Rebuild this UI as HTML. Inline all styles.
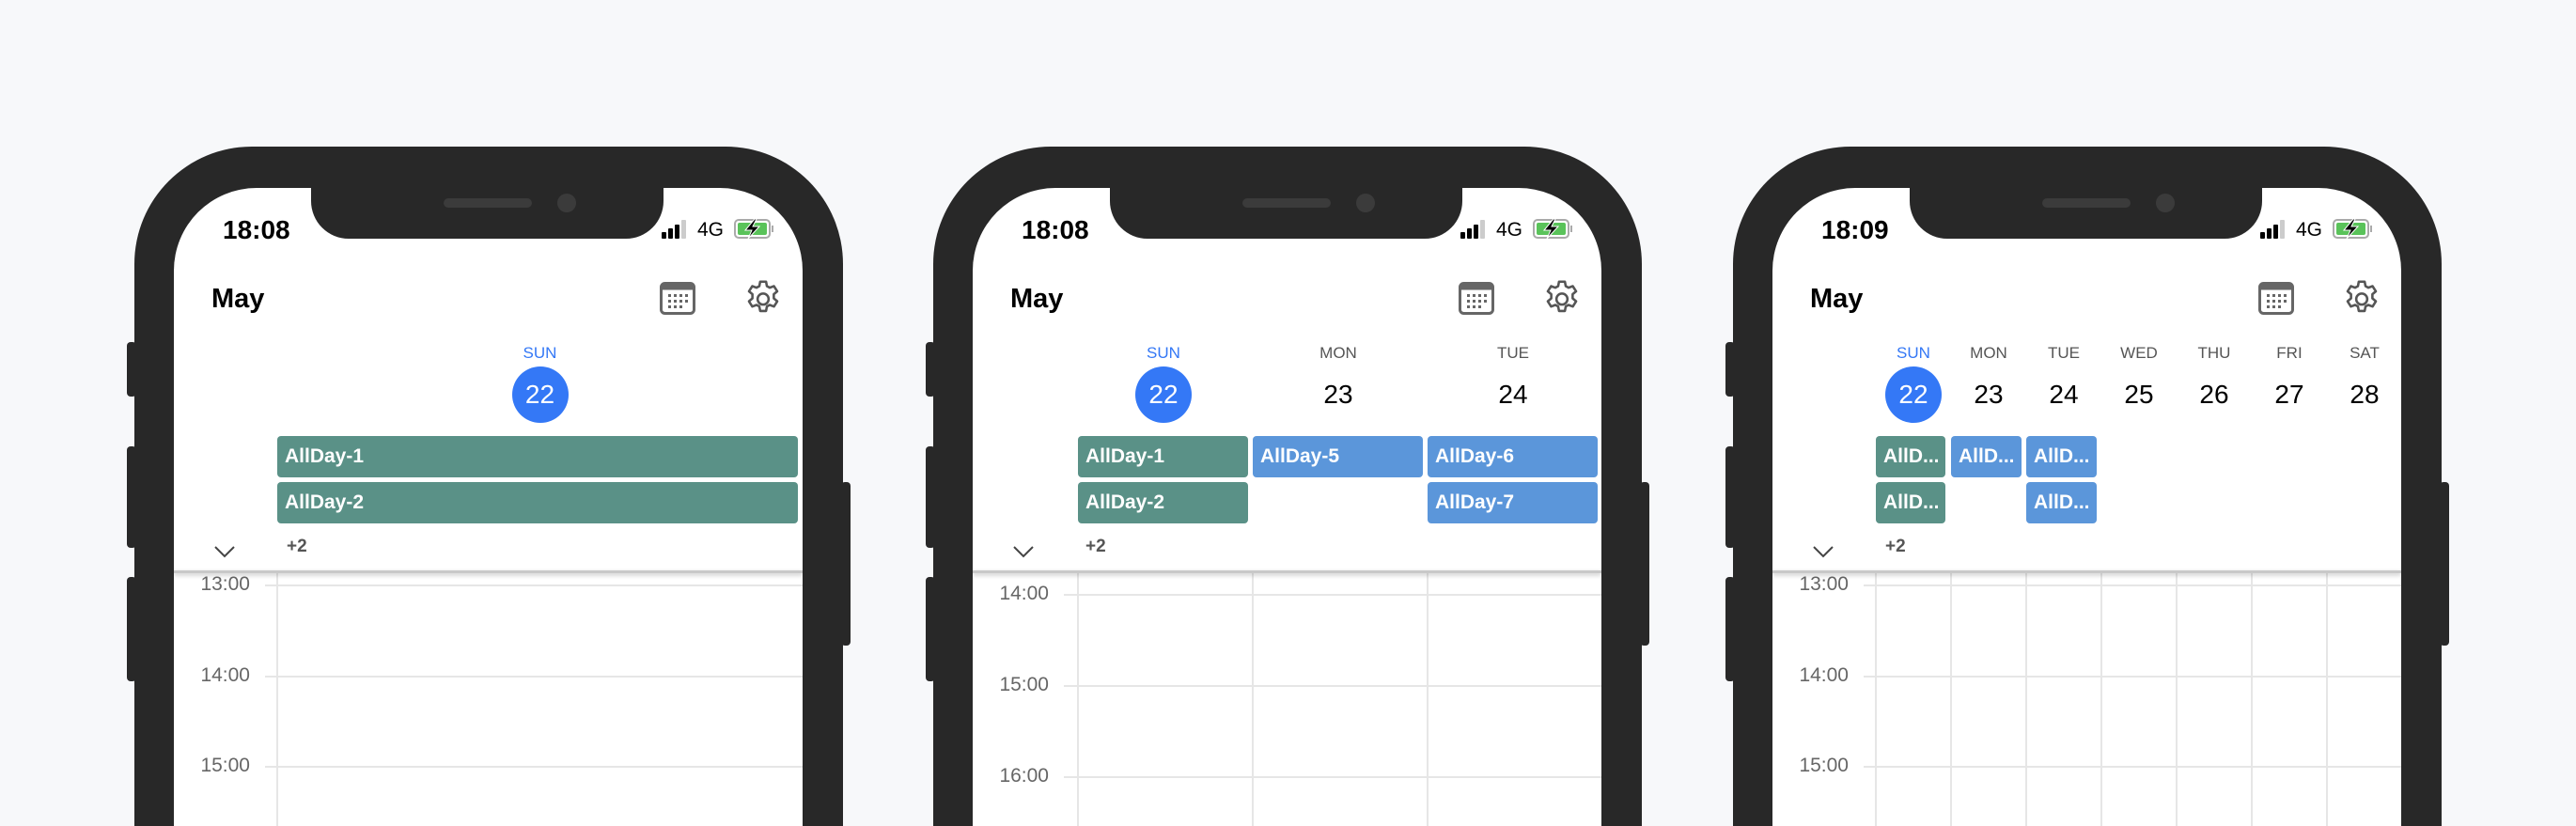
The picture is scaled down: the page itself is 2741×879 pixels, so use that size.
<!DOCTYPE html><html><head><style>
*{margin:0;padding:0;box-sizing:border-box}
html,body{width:2741px;height:879px;overflow:hidden}
body{background:#f7f8fa;position:relative;font-family:"Liberation Sans",Arial,sans-serif}
.ph{position:absolute;top:156px;width:754px;height:723px;background:#282828;border-radius:125px 125px 0 0}
.btn{position:absolute;width:10px;background:#282828;border-radius:4px}
.sc{position:absolute;left:42px;top:44px;width:669px;height:679px;background:#fff;border-radius:88px 88px 0 0;overflow:hidden}
.notch{position:absolute;left:146px;top:0;width:375px;height:54px;background:#282828;border-radius:0 0 40px 40px}
.spk{position:absolute;left:141px;top:11px;width:94px;height:10px;background:#3b3b3b;border-radius:5px}
.cam{position:absolute;left:262px;top:6px;width:20px;height:20px;background:#3b3b3b;border-radius:50%}
.time{position:absolute;left:52px;top:29px;font-size:28px;font-weight:700;color:#000}
.sig{position:absolute;left:519px;top:34px}
.g4{position:absolute;left:557px;top:33px;font-size:21px;color:#000}
.bat{position:absolute;left:596px;top:33px}
.may{position:absolute;left:40px;top:102px;font-size:29px;font-weight:700;color:#000}
.cal{position:absolute;left:517px;top:100px}
.gear{position:absolute;left:605px;top:97px}
.dl{position:absolute;top:166px;font-size:17px;color:#555;text-align:center}
.dn{position:absolute;top:204px;font-size:28px;color:#000;text-align:center;line-height:32px}
.circ{position:absolute;top:190px;width:60px;height:60px;border-radius:50%;background:#3478f6}
.ev{position:absolute;height:44px;border-radius:4px;color:#fff;font-size:21px;font-weight:700;line-height:44px;padding-left:8px;white-space:nowrap;overflow:hidden}
.gr{background:#5a9187}.bl{background:#5b96da}
.chev{position:absolute;left:43px;top:380px}
.more{position:absolute;left:120px;top:371px;font-size:19px;font-weight:700;color:#555}
.hd{position:absolute;left:0;top:407px;width:669px;height:3px;background:#c8c8c8;box-shadow:0 2px 5px rgba(0,0,0,.25)}
.hl{position:absolute;left:97px;width:572px;height:2px;background:#e6e6e6}
.vl{position:absolute;top:410px;width:2px;height:300px;background:#e6e6e6}
.tl{position:absolute;width:81px;text-align:right;font-size:21px;color:#666}
</style></head><body>

<div class="ph" style="left:143px">
<div class="btn" style="left:-8px;top:208px;height:58px"></div>
<div class="btn" style="left:-8px;top:319px;height:108px"></div>
<div class="btn" style="left:-8px;top:458px;height:111px"></div>
<div class="btn" style="left:752px;top:357px;height:174px"></div>
<div class="sc">
<div class="notch"><div class="spk"></div><div class="cam"></div></div>
<div class="time">18:08</div>
<svg class="sig" width="30" height="20"><rect x="0" y="13" width="5" height="7" rx="1"/><rect x="7" y="9" width="5" height="11" rx="1"/><rect x="14" y="5" width="5" height="15" rx="1"/><rect x="21" y="0" width="5" height="20" rx="1" fill="#ccc"/></svg>
<div class="g4">4G</div>
<svg class="bat" width="44" height="21"><rect x="1" y="1" width="37" height="19" rx="4" fill="none" stroke="#aaa" stroke-width="2"/><rect x="4" y="4" width="31" height="13" rx="2" fill="#5ac35a"/><rect x="40" y="7" width="2" height="7" fill="#aaa"/><path d="M22 0 L12 12 L19 12 L15 21 L27 8 L20 8 L24 0Z" fill="#000" stroke="#fff" stroke-width="1"/></svg>
<div class="may">May</div>
<svg class="cal" width="38" height="35"><rect x="1.5" y="1.5" width="35" height="32" rx="4" fill="#fff" stroke="#666" stroke-width="3"/><rect x="1.5" y="1.5" width="35" height="7" fill="#666"/><g fill="#666"><rect x="9" y="13" width="3" height="3"/><rect x="15" y="13" width="3" height="3"/><rect x="21" y="13" width="3" height="3"/><rect x="27" y="13" width="3" height="3"/><rect x="9" y="19" width="3" height="3"/><rect x="15" y="19" width="3" height="3"/><rect x="21" y="19" width="3" height="3"/><rect x="27" y="19" width="3" height="3"/><rect x="9" y="25" width="3" height="3"/><rect x="15" y="25" width="3" height="3"/><rect x="21" y="25" width="3" height="3"/></g></svg>
<svg class="gear" width="44" height="44" viewBox="0 0 24 24"><path fill="none" stroke="#555" stroke-width="1.4" stroke-linejoin="round" d="M10.3 1.5h3.4l.5 2.6 1.6.9 2.5-.9 1.9 3-2 1.7v2.4l2 1.7-1.9 3-2.5-.9-1.6.9-.5 2.6h-3.4l-.5-2.6-1.6-.9-2.5.9-1.9-3 2-1.7V8.8l-2-1.7 1.9-3 2.5.9 1.6-.9z"/><circle cx="12" cy="11.6" r="3.2" fill="none" stroke="#555" stroke-width="1.4"/></svg>
<div class="dl" style="left:110px;width:559px;color:#3478f6">SUN</div>
<div class="circ" style="left:360px"></div>
<div class="dn" style="left:110px;width:559px;color:#fff">22</div>
<div class="ev gr" style="left:110px;top:264px;width:554px">AllDay-1</div>
<div class="ev gr" style="left:110px;top:313px;width:554px">AllDay-2</div>
<svg class="chev" width="22" height="14"><path d="M1 2 L11 12 L21 2" fill="none" stroke="#444" stroke-width="2"/></svg>
<div class="more">+2</div>
<div class="vl" style="left:109px"></div>
<div class="hl" style="top:422px"></div><div class="hl" style="top:519px"></div><div class="hl" style="top:615px"></div>
<div class="tl" style="left:0;top:410px">13:00</div><div class="tl" style="left:0;top:507px">14:00</div><div class="tl" style="left:0;top:603px">15:00</div>
<div class="hd"></div>
</div></div>

<div class="ph" style="left:993px">
<div class="btn" style="left:-8px;top:208px;height:58px"></div>
<div class="btn" style="left:-8px;top:319px;height:108px"></div>
<div class="btn" style="left:-8px;top:458px;height:111px"></div>
<div class="btn" style="left:752px;top:357px;height:174px"></div>
<div class="sc">
<div class="notch"><div class="spk"></div><div class="cam"></div></div>
<div class="time">18:08</div>
<svg class="sig" width="30" height="20"><rect x="0" y="13" width="5" height="7" rx="1"/><rect x="7" y="9" width="5" height="11" rx="1"/><rect x="14" y="5" width="5" height="15" rx="1"/><rect x="21" y="0" width="5" height="20" rx="1" fill="#ccc"/></svg>
<div class="g4">4G</div>
<svg class="bat" width="44" height="21"><rect x="1" y="1" width="37" height="19" rx="4" fill="none" stroke="#aaa" stroke-width="2"/><rect x="4" y="4" width="31" height="13" rx="2" fill="#5ac35a"/><rect x="40" y="7" width="2" height="7" fill="#aaa"/><path d="M22 0 L12 12 L19 12 L15 21 L27 8 L20 8 L24 0Z" fill="#000" stroke="#fff" stroke-width="1"/></svg>
<div class="may">May</div>
<svg class="cal" width="38" height="35"><rect x="1.5" y="1.5" width="35" height="32" rx="4" fill="#fff" stroke="#666" stroke-width="3"/><rect x="1.5" y="1.5" width="35" height="7" fill="#666"/><g fill="#666"><rect x="9" y="13" width="3" height="3"/><rect x="15" y="13" width="3" height="3"/><rect x="21" y="13" width="3" height="3"/><rect x="27" y="13" width="3" height="3"/><rect x="9" y="19" width="3" height="3"/><rect x="15" y="19" width="3" height="3"/><rect x="21" y="19" width="3" height="3"/><rect x="27" y="19" width="3" height="3"/><rect x="9" y="25" width="3" height="3"/><rect x="15" y="25" width="3" height="3"/><rect x="21" y="25" width="3" height="3"/></g></svg>
<svg class="gear" width="44" height="44" viewBox="0 0 24 24"><path fill="none" stroke="#555" stroke-width="1.4" stroke-linejoin="round" d="M10.3 1.5h3.4l.5 2.6 1.6.9 2.5-.9 1.9 3-2 1.7v2.4l2 1.7-1.9 3-2.5-.9-1.6.9-.5 2.6h-3.4l-.5-2.6-1.6-.9-2.5.9-1.9-3 2-1.7V8.8l-2-1.7 1.9-3 2.5.9 1.6-.9z"/><circle cx="12" cy="11.6" r="3.2" fill="none" stroke="#555" stroke-width="1.4"/></svg>
<div class="dl" style="left:110px;width:186px;color:#3478f6">SUN</div>
<div class="dl" style="left:296px;width:186px">MON</div>
<div class="dl" style="left:482px;width:186px">TUE</div>
<div class="circ" style="left:173px"></div>
<div class="dn" style="left:110px;width:186px;color:#fff">22</div>
<div class="dn" style="left:296px;width:186px">23</div>
<div class="dn" style="left:482px;width:186px">24</div>
<div class="ev gr" style="left:112px;top:264px;width:181px">AllDay-1</div>
<div class="ev gr" style="left:112px;top:313px;width:181px">AllDay-2</div>
<div class="ev bl" style="left:298px;top:264px;width:181px">AllDay-5</div>
<div class="ev bl" style="left:484px;top:264px;width:181px">AllDay-6</div>
<div class="ev bl" style="left:484px;top:313px;width:181px">AllDay-7</div>
<svg class="chev" width="22" height="14"><path d="M1 2 L11 12 L21 2" fill="none" stroke="#444" stroke-width="2"/></svg>
<div class="more">+2</div>
<div class="vl" style="left:111px"></div><div class="vl" style="left:297px"></div><div class="vl" style="left:483px"></div>
<div class="hl" style="top:432px"></div><div class="hl" style="top:529px"></div><div class="hl" style="top:626px"></div>
<div class="tl" style="left:0;top:420px">14:00</div><div class="tl" style="left:0;top:517px">15:00</div><div class="tl" style="left:0;top:614px">16:00</div>
<div class="hd"></div>
</div></div>

<div class="ph" style="left:1844px">
<div class="btn" style="left:-8px;top:208px;height:58px"></div>
<div class="btn" style="left:-8px;top:319px;height:108px"></div>
<div class="btn" style="left:-8px;top:458px;height:111px"></div>
<div class="btn" style="left:752px;top:357px;height:174px"></div>
<div class="sc">
<div class="notch"><div class="spk"></div><div class="cam"></div></div>
<div class="time">18:09</div>
<svg class="sig" width="30" height="20"><rect x="0" y="13" width="5" height="7" rx="1"/><rect x="7" y="9" width="5" height="11" rx="1"/><rect x="14" y="5" width="5" height="15" rx="1"/><rect x="21" y="0" width="5" height="20" rx="1" fill="#ccc"/></svg>
<div class="g4">4G</div>
<svg class="bat" width="44" height="21"><rect x="1" y="1" width="37" height="19" rx="4" fill="none" stroke="#aaa" stroke-width="2"/><rect x="4" y="4" width="31" height="13" rx="2" fill="#5ac35a"/><rect x="40" y="7" width="2" height="7" fill="#aaa"/><path d="M22 0 L12 12 L19 12 L15 21 L27 8 L20 8 L24 0Z" fill="#000" stroke="#fff" stroke-width="1"/></svg>
<div class="may">May</div>
<svg class="cal" width="38" height="35"><rect x="1.5" y="1.5" width="35" height="32" rx="4" fill="#fff" stroke="#666" stroke-width="3"/><rect x="1.5" y="1.5" width="35" height="7" fill="#666"/><g fill="#666"><rect x="9" y="13" width="3" height="3"/><rect x="15" y="13" width="3" height="3"/><rect x="21" y="13" width="3" height="3"/><rect x="27" y="13" width="3" height="3"/><rect x="9" y="19" width="3" height="3"/><rect x="15" y="19" width="3" height="3"/><rect x="21" y="19" width="3" height="3"/><rect x="27" y="19" width="3" height="3"/><rect x="9" y="25" width="3" height="3"/><rect x="15" y="25" width="3" height="3"/><rect x="21" y="25" width="3" height="3"/></g></svg>
<svg class="gear" width="44" height="44" viewBox="0 0 24 24"><path fill="none" stroke="#555" stroke-width="1.4" stroke-linejoin="round" d="M10.3 1.5h3.4l.5 2.6 1.6.9 2.5-.9 1.9 3-2 1.7v2.4l2 1.7-1.9 3-2.5-.9-1.6.9-.5 2.6h-3.4l-.5-2.6-1.6-.9-2.5.9-1.9-3 2-1.7V8.8l-2-1.7 1.9-3 2.5.9 1.6-.9z"/><circle cx="12" cy="11.6" r="3.2" fill="none" stroke="#555" stroke-width="1.4"/></svg>
<div class="dl" style="left:110px;width:80px;color:#3478f6">SUN</div>
<div class="dl" style="left:190px;width:80px">MON</div>
<div class="dl" style="left:270px;width:80px">TUE</div>
<div class="dl" style="left:350px;width:80px">WED</div>
<div class="dl" style="left:430px;width:80px">THU</div>
<div class="dl" style="left:510px;width:80px">FRI</div>
<div class="dl" style="left:590px;width:80px">SAT</div>
<div class="circ" style="left:120px"></div>
<div class="dn" style="left:110px;width:80px;color:#fff">22</div>
<div class="dn" style="left:190px;width:80px">23</div>
<div class="dn" style="left:270px;width:80px">24</div>
<div class="dn" style="left:350px;width:80px">25</div>
<div class="dn" style="left:430px;width:80px">26</div>
<div class="dn" style="left:510px;width:80px">27</div>
<div class="dn" style="left:590px;width:80px">28</div>
<div class="ev gr" style="left:110px;top:264px;width:74px">AllD...</div>
<div class="ev gr" style="left:110px;top:313px;width:74px">AllD...</div>
<div class="ev bl" style="left:190px;top:264px;width:75px">AllD...</div>
<div class="ev bl" style="left:270px;top:264px;width:75px">AllD...</div>
<div class="ev bl" style="left:270px;top:313px;width:75px">AllD...</div>
<svg class="chev" width="22" height="14"><path d="M1 2 L11 12 L21 2" fill="none" stroke="#444" stroke-width="2"/></svg>
<div class="more">+2</div>
<div class="vl" style="left:109px"></div><div class="vl" style="left:189px"></div><div class="vl" style="left:269px"></div><div class="vl" style="left:349px"></div><div class="vl" style="left:429px"></div><div class="vl" style="left:509px"></div><div class="vl" style="left:589px"></div>
<div class="hl" style="top:422px"></div><div class="hl" style="top:519px"></div><div class="hl" style="top:615px"></div>
<div class="tl" style="left:0;top:410px">13:00</div><div class="tl" style="left:0;top:507px">14:00</div><div class="tl" style="left:0;top:603px">15:00</div>
<div class="hd"></div>
</div></div>
</body></html>
